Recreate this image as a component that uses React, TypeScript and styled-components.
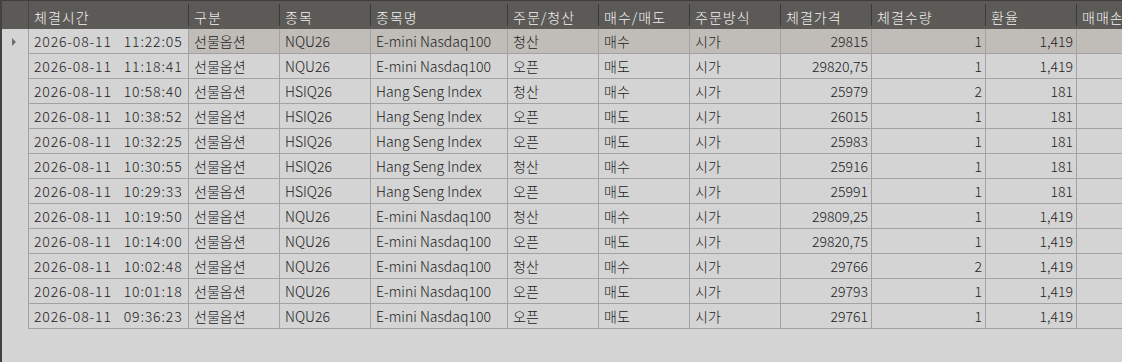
import styled, { createGlobalStyle } from 'styled-components';

const GlobalStyle = createGlobalStyle`
  html, body {
    margin: 0;
    padding: 0;
    background: #d4d4d4;
    overflow: hidden;
  }
  body {
    font-family: "Noto Sans CJK KR", "Liberation Sans", sans-serif;
  }
`;

const Grid = styled.div`
  width: 1122px;
  height: 362px;
  box-sizing: border-box;
  border-left: 2px solid #424242;
  background: #d4d4d4;
  overflow: hidden;
  display: flex;
  flex-direction: column;
`;

const HeaderRow = styled.div`
  display: flex;
  height: 29px;
  box-sizing: border-box;
  border-top: 1px solid #3e3e3e;
  background: #5c5a57;
  flex-shrink: 0;
`;

const HeaderCorner = styled.div`
  width: 26px;
  border-right: 1px solid #474644;
  flex-shrink: 0;
`;

const HeaderCell = styled.div<{ $w: number }>`
  position: relative;
  width: ${(p) => p.$w}px;
  flex-shrink: 0;
  box-sizing: border-box;
  padding: 3px 0 0 5px;
  display: flex;
  align-items: center;
  color: #f2f2f2;
  font-size: 14px;
  font-weight: 300;
  letter-spacing: 1px;
  white-space: nowrap;
  overflow: hidden;
  &::after {
    content: '';
    position: absolute;
    right: 0;
    top: 3px;
    bottom: 3px;
    width: 1px;
    background: #3a3a3a;
  }
`;

const Row = styled.div`
  display: flex;
  height: 25px;
  flex-shrink: 0;
`;

const RowHead = styled.div`
  width: 26px;
  flex-shrink: 0;
  display: flex;
  align-items: center;
  padding-left: 10px;
  box-sizing: border-box;
`;

const Arrow = styled.span`
  width: 0;
  height: 0;
  border-top: 4px solid transparent;
  border-bottom: 4px solid transparent;
  border-left: 4px solid #6e6e6e;
  margin-top: 1px;
`;

const Cells = styled.div`
  display: flex;
  border-left: 1px solid #a2a2a2;
`;

const Cell = styled.div<{ $w: number; $right?: boolean; $sel?: boolean; $wide?: boolean }>`
  width: ${(p) => p.$w}px;
  flex-shrink: 0;
  box-sizing: border-box;
  border-right: 1px solid #a2a2a2;
  border-bottom: 1px solid #a2a2a2;
  background: ${(p) => (p.$sel ? '#c0bcb8' : '#d4d4d4')};
  color: #222;
  font-size: 14px;
  font-weight: 300;
  letter-spacing: ${(p) => (p.$wide ? '0.85px' : '0')};
  display: flex;
  gap: 12px;
  align-items: center;
  justify-content: ${(p) => (p.$right ? 'flex-end' : 'flex-start')};
  padding: ${(p) => (p.$right ? '0 3px 0 0' : '0 0 0 5px')};
  white-space: nowrap;
  overflow: hidden;
`;

const columns = [
  { title: '체결시간', w: 160 },
  { title: '구분', w: 91 },
  { title: '종목', w: 91 },
  { title: '종목명', w: 137 },
  { title: '주문/청산', w: 91 },
  { title: '매수/매도', w: 91 },
  { title: '주문방식', w: 91 },
  { title: '체결가격', w: 91, right: true },
  { title: '체결수량', w: 114, right: true },
  { title: '환율', w: 91, right: true },
  { title: '매매손익', w: 100, right: true },
];

const NQ = ['NQU26', 'E-mini Nasdaq100', '1,419'];
const HS = ['HSIQ26', 'Hang Seng Index', '181'];

const raw: [string, string[], string, string, string, string][] = [
  ['11:22:05', NQ, '청산', '매수', '29815', '1'],
  ['11:18:41', NQ, '오픈', '매도', '29820,75', '1'],
  ['10:58:40', HS, '청산', '매수', '25979', '2'],
  ['10:38:52', HS, '오픈', '매도', '26015', '1'],
  ['10:32:25', HS, '오픈', '매도', '25983', '1'],
  ['10:30:55', HS, '청산', '매수', '25916', '1'],
  ['10:29:33', HS, '오픈', '매도', '25991', '1'],
  ['10:19:50', NQ, '청산', '매수', '29809,25', '1'],
  ['10:14:00', NQ, '오픈', '매도', '29820,75', '1'],
  ['10:02:48', NQ, '청산', '매수', '29766', '2'],
  ['10:01:18', NQ, '오픈', '매도', '29793', '1'],
  ['09:36:23', NQ, '오픈', '매도', '29761', '1'],
];

const rows = raw.map(([time, item, oc, side, price, qty]) => ({
  time,
  values: ['선물옵션', item[0], item[1], oc, side, '시가', price, qty, item[2], ''],
}));

const App: React.FC = () => {
  return (
    <>
      <GlobalStyle />
      <Grid>
        <HeaderRow>
          <HeaderCorner />
          {columns.map((c) => (
            <HeaderCell key={c.title} $w={c.w}>
              {c.title}
            </HeaderCell>
          ))}
        </HeaderRow>
        {rows.map((r, i) => (
          <Row key={i}>
            <RowHead>{i === 0 && <Arrow />}</RowHead>
            <Cells>
              <Cell $w={columns[0].w} $wide>
                <span>2026-08-11</span>
                <span>{r.time}</span>
              </Cell>
              {r.values.map((v, j) => (
                <Cell
                  key={j}
                  $w={columns[j + 1].w}
                  $right={columns[j + 1].right}
                  $sel={i === 0}
                >
                  {v}
                </Cell>
              ))}
            </Cells>
          </Row>
        ))}
      </Grid>
    </>
  );
};

export default App;
